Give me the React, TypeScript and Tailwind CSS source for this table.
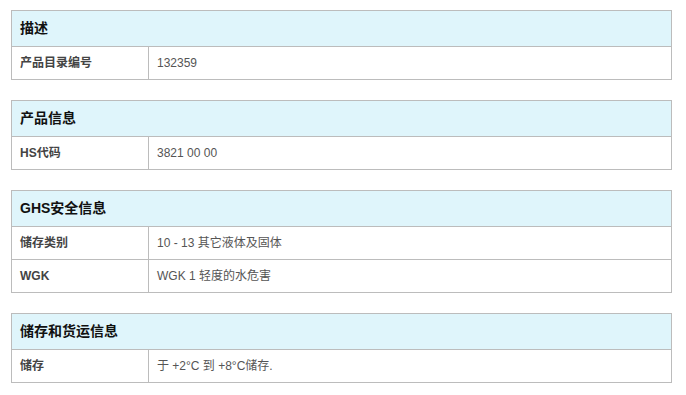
const sections = [
  { title: '描述', rows: [{ key: '产品目录编号', value: '132359' }] },
  { title: '产品信息', rows: [{ key: 'HS代码', value: '3821 00 00' }] },
  {
    title: 'GHS安全信息',
    rows: [
      { key: '储存类别', value: '10 - 13 其它液体及固体' },
      { key: 'WGK', value: 'WGK 1 轻度的水危害' },
    ],
  },
  { title: '储存和货运信息', rows: [{ key: '储存', value: '于 +2°C 到 +8°C储存.' }] },
]

const App = () => {
  return (
    <div
      className="w-[686px] h-[395px] bg-white pt-[10px] pl-[11px] flex flex-col gap-5"
      style={{ fontFamily: '"Liberation Sans", "Noto Sans CJK SC", sans-serif' }}
    >
      {sections.map((s) => (
        <div key={s.title} className="w-[661px] border border-[#bcbcbc]">
          <div className="h-[35px] bg-[#dff5fb] flex items-center pl-2 text-[14px] font-bold text-[#111]">
            {s.title}
          </div>
          {s.rows.map((r) => (
            <div key={r.key} className="flex h-[33px] border-t border-[#bcbcbc]">
              <div className="w-[137px] border-r border-[#bcbcbc] flex items-center pl-2 text-[12px] font-bold text-[#444]">
                {r.key}
              </div>
              <div className="flex-1 flex items-center pl-2 text-[12px] text-[#555]">{r.value}</div>
            </div>
          ))}
        </div>
      ))}
    </div>
  )
}

export default App
